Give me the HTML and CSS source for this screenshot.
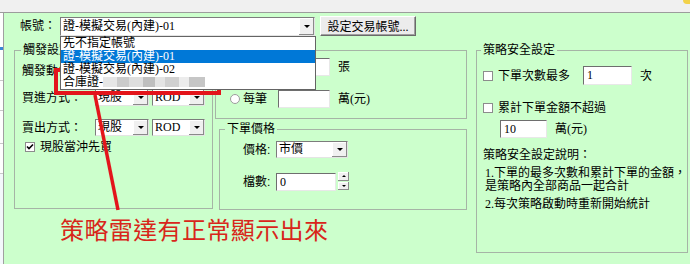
FILE: index.html
```html
<!DOCTYPE html>
<html>
  <head>
    <meta charset="UTF-8">
    <title>策略設定</title>
    <link rel="stylesheet" href="styles.css">
  </head>
  <body>
    <div class="titlebar"><span class="corner"></span></div>
    <div class="window">
      <div class="strip"></div>
      <div class="form">

        <div class="account-row">
          <span class="account-label">帳號：</span>
          <div class="combo account-combo">
            <span class="combo-text">證-模擬交易(內建)-01</span>
            <span class="arrow"></span>
            <ul class="droplist">
              <li>先不指定帳號</li>
              <li class="selected">證-模擬交易(內建)-01</li>
              <li>證-模擬交易(內建)-02</li>
              <li>合庫證-<span class="blur"></span></li>
            </ul>
          </div>
          <button class="btn">設定交易帳號...</button>
        </div>

        <div class="body-row">
          <div class="left-area">
            <div class="groups">
              <fieldset class="group trigger">
                <legend>觸發設定</legend>
                <div class="row trigger-row1">
                  <span class="field-label">觸發動作：</span>
                  <div class="combo combo-a"><span class="combo-text">立即</span><span class="arrow"></span></div>
                </div>
                <div class="row trigger-row2">
                  <span class="field-label">買進方式：</span>
                  <div class="combo combo-a"><span class="combo-text">現股</span><span class="arrow"></span></div>
                  <div class="combo combo-b"><span class="combo-text">ROD</span><span class="arrow"></span></div>
                </div>
                <div class="row trigger-row3">
                  <span class="field-label">賣出方式：</span>
                  <div class="combo combo-a"><span class="combo-text">現股</span><span class="arrow"></span></div>
                  <div class="combo combo-b"><span class="combo-text">ROD</span><span class="arrow"></span></div>
                </div>
                <div class="check-row trigger-check">
                  <span class="check checked">
                    <svg width="8" height="8" viewBox="0 0 8 8"><path d="M1 3.5 L3 5.5 L7 1.5" fill="none" stroke="#000" stroke-width="1.6"/></svg>
                  </span>
                  <span>現股當沖先買</span>
                </div>
              </fieldset>

              <div class="middle">
                <div class="box qty">
                  <div class="row qty-row1">
                    <span class="radio"></span>
                    <span class="radio-label">每次</span>
                    <span class="input qty-input"></span>
                    <span class="unit">張</span>
                  </div>
                  <div class="row qty-row2">
                    <span class="radio"></span>
                    <span class="radio-label">每筆</span>
                    <span class="input qty-input"></span>
                    <span class="unit">萬(元)</span>
                  </div>
                </div>

                <fieldset class="group price">
                  <legend>下單價格</legend>
                  <div class="row price-row">
                    <span class="price-label">價格:</span>
                    <div class="combo combo-price"><span class="combo-text">市價</span><span class="arrow"></span></div>
                  </div>
                  <div class="row count-row">
                    <span class="price-label">檔數:</span>
                    <span class="input count-input">0</span>
                    <span class="spinner">
                      <span class="spin up"></span>
                      <span class="spin down"></span>
                    </span>
                  </div>
                </fieldset>
              </div>
            </div>

            <div class="caption">策略雷達有正常顯示出來</div>
          </div>

          <fieldset class="group safety">
            <legend>策略安全設定</legend>
            <div class="row safety-row1">
              <span class="check"></span>
              <span class="safety-label">下單次數最多</span>
              <span class="input times-input">1</span>
              <span class="unit">次</span>
            </div>
            <div class="check-row safety-row2">
              <span class="check"></span>
              <span>累計下單金額不超過</span>
            </div>
            <div class="row safety-row3">
              <span class="input amount-input">10</span>
              <span class="unit">萬(元)</span>
            </div>
            <div class="note-title">策略安全設定說明：</div>
            <div class="note note1">1.下單的最多次數和累計下單的金額，<br>是策略內全部商品一起合計</div>
            <div class="note note2">2.每次策略啟動時重新開始統計</div>
          </fieldset>
        </div>

      </div>
    </div>

    <!-- red markup drawn over the dialog -->
    <svg class="annotation" width="690" height="264" viewBox="0 0 690 264">
      <rect x="56" y="70" width="163" height="23" fill="none" stroke="#e3141b" stroke-width="4"/>
      <line x1="95" y1="95" x2="118" y2="210" stroke="#e3141b" stroke-width="3.5"/>
    </svg>
  </body>
</html>
```

FILE: styles.css
```css
body {
  margin: 0;
  width: 690px;
  height: 264px;
  overflow: hidden;
  position: relative;
  background-color: #ccffcc;
  font-family: "Liberation Serif", "Noto Sans CJK TC", serif;
  font-size: 12px;
  line-height: 14px;
  color: #000;
}

/* window top edge */
.titlebar {
  height: 12px;
  background-color: #f0f0f0;
  border-bottom: 1px solid #9c9c9c;
  display: flex;
  justify-content: flex-end;
}

.corner {
  width: 7px;
  height: 4px;
  background-color: #f2d24a;
  border-radius: 0 0 0 6px;
}

.window {
  display: flex;
  height: 251px;
}

/* list view peeking in on the left */
.strip {
  width: 3px;
  border-right: 1px solid #a0a0a0;
  background: linear-gradient(to bottom,
    #fff 0, #fff 34px, #3a86d6 34px, #3a86d6 37px, #fff 37px,
    #fff 67px, #c8c8c8 67px, #c8c8c8 68px, #fff 68px,
    #fff 97px, #c8c8c8 97px, #c8c8c8 98px, #fff 98px,
    #fff 130px, #c8c8c8 130px, #c8c8c8 131px, #fff 131px,
    #fff 160px, #c8c8c8 160px, #c8c8c8 161px, #f4f8fc 161px);
}

.form {
  flex: 1;
}

/* account selector */
.account-row {
  display: flex;
  align-items: center;
  height: 20px;
  margin-top: 3px;
  padding-left: 16px;
}

.account-label {
  width: 40px;
}

.combo {
  display: flex;
  box-sizing: border-box;
  background-color: #fff;
  border: 1px solid;
  border-color: #7c7c7c #e4e4e4 #e4e4e4 #7c7c7c;
  position: relative;
}

.combo-text {
  flex: 1;
  padding-left: 2px;
  white-space: nowrap;
  overflow: hidden;
}

.arrow {
  width: 15px;
  background-color: #f0f0f0;
  box-shadow: inset -1px -1px 0 #8a8a8a, inset 1px 1px 0 #fff;
  display: flex;
  align-items: center;
  justify-content: center;
}

.arrow::after {
  content: "";
  border-left: 3px solid transparent;
  border-right: 3px solid transparent;
  border-top: 3px solid #000;
}

.account-combo {
  width: 255px;
  height: 19px;
  align-self: flex-end;
}

.account-combo .combo-text {
  line-height: 17px;
}

/* open drop-down list */
.droplist {
  position: absolute;
  top: calc(100% + 1px);
  left: -1px;
  width: 254px;
  margin: 0;
  padding: 0;
  list-style: none;
  background-color: #fff;
  border: 1px solid #646464;
  z-index: 2;
}

.droplist li {
  height: 13px;
  line-height: 13px;
  padding-left: 2px;
  white-space: nowrap;
}

.droplist li.selected {
  background-color: #0078d7;
  color: #fff;
}

.blur {
  display: inline-block;
  width: 102px;
  height: 10px;
  vertical-align: -1px;
  background: linear-gradient(90deg,
    #e6e6e6 0, #e6e6e6 14px, #cbcbcb 14px, #cbcbcb 26px,
    #dedede 26px, #dedede 40px, #bfbfbf 40px, #bfbfbf 52px,
    #e4e4e4 52px, #e4e4e4 62px, #d0d0d0 62px, #d0d0d0 76px,
    #ececec 76px, #ececec 86px, #c6c6c6 86px, #c6c6c6 102px);
}

.btn {
  margin-left: 5px;
  width: 96px;
  height: 20px;
  padding: 0;
  font-family: inherit;
  font-size: 12px;
  background-color: #ececec;
  border: 1px solid;
  border-color: #fff #6a6a6a #6a6a6a #fff;
  box-shadow: inset -1px -1px 0 #a0a0a0;
}

/* group boxes */
.body-row {
  display: flex;
  align-items: flex-start;
  margin-top: 7px;
  padding-left: 10px;
}

.left-area {
  display: flex;
  flex-direction: column;
  width: 453px;
}

.groups {
  display: flex;
  align-items: flex-start;
}

.group {
  margin: 0;
  padding: 0;
  min-width: 0;
  box-sizing: border-box;
  border: 1px solid #a6b4a6;
}

.group legend {
  padding: 0 2px;
  line-height: 14px;
}

.row {
  display: flex;
  align-items: center;
}

.check-row {
  display: flex;
  align-items: center;
  height: 12px;
}

.trigger {
  width: 199px;
  height: 166px;
  padding-left: 7px;
}

.trigger legend {
  margin-left: -1px;
}

.field-label {
  width: 73px;
}

.combo-a {
  width: 54px;
  height: 17px;
}

.combo-b {
  width: 53px;
  height: 17px;
  margin-left: 3px;
}

.combo-a .combo-text, .combo-b .combo-text, .combo-price .combo-text {
  line-height: 15px;
}

.trigger-row1 { margin-top: 5px; }
.trigger-row2 { margin-top: 10px; }
.trigger-row3 { margin-top: 13px; }
.trigger-check { margin-top: 5px; padding-left: 3px; }

.check {
  width: 10px;
  height: 10px;
  box-sizing: border-box;
  background-color: #fff;
  border: 1px solid #8c8c8c;
  margin-right: 5px;
  display: flex;
  align-items: center;
  justify-content: center;
}

.radio {
  width: 10px;
  height: 10px;
  box-sizing: border-box;
  border-radius: 50%;
  background-color: #fff;
  border: 1px solid #9c9c9c;
  margin-right: 3px;
}

.input {
  box-sizing: border-box;
  background-color: #fff;
  border: 1px solid;
  border-color: #6e6e6e #e8e8e8 #e8e8e8 #6e6e6e;
  padding-left: 3px;
}

/* middle column */
.middle {
  display: flex;
  flex-direction: column;
  width: 252px;
  margin-left: 2px;
}

.qty {
  margin-top: 7px;
  height: 69px;
  box-sizing: border-box;
  border: 1px solid #a6b4a6;
  padding-left: 14px;
}

.radio-label {
  width: 35px;
}

.qty-input {
  width: 52px;
  height: 18px;
}

.unit {
  margin-left: 8px;
}

.qty-row1 { margin-top: 7px; }
.qty-row2 { margin-top: 14px; }

.price {
  margin-top: 3px;
  margin-left: 4px;
  width: 248px;
  height: 88px;
  padding-left: 23px;
}

.price legend {
  margin-left: -18px;
}

.price-label {
  width: 33px;
  font-family: "Liberation Sans", "Noto Sans CJK TC", sans-serif;
}

.combo-price {
  width: 72px;
  height: 17px;
}

.count-input {
  width: 60px;
  height: 18px;
  line-height: 16px;
}

.spinner {
  display: flex;
  flex-direction: column;
  margin-left: 2px;
  height: 19px;
}

.spin {
  width: 11px;
  height: 9px;
  margin-bottom: 1px;
  background-color: #f0f0f0;
  box-shadow: inset -1px -1px 0 #8a8a8a, inset 1px 1px 0 #fff;
  display: flex;
  align-items: center;
  justify-content: center;
}

.spin.up::after {
  content: "";
  border-left: 2px solid transparent;
  border-right: 2px solid transparent;
  border-bottom: 2px solid #000;
}

.spin.down::after {
  content: "";
  border-left: 2px solid transparent;
  border-right: 2px solid transparent;
  border-top: 2px solid #000;
}

.price-row { margin-top: 5px; }
.count-row { margin-top: 14px; }

.caption {
  margin-top: 6px;
  margin-left: 46px;
  font-family: "Noto Sans CJK TC", sans-serif;
  font-size: 24px;
  line-height: 26px;
  letter-spacing: 0.4px;
  color: #d8261a;
}

/* right group */
.safety {
  margin-left: 9px;
  width: 212px;
  height: 210px;
  padding-left: 6px;
}

.safety legend {
  margin-left: -2px;
}

.safety-label {
  width: 85px;
}

.times-input {
  width: 49px;
  height: 19px;
  line-height: 17px;
}

.amount-input {
  margin-left: 17px;
  width: 47px;
  height: 18px;
  line-height: 16px;
}

.safety-row1 { margin-top: 9px; }
.safety-row2 { margin-top: 16px; height: 14px; }
.safety-row3 { margin-top: 5px; }

.note-title {
  margin-top: 10px;
}

.note {
  white-space: nowrap;
  padding-left: 2px;
  line-height: 13px;
}

.note1 { margin-top: 5px; }
.note2 { margin-top: 5px; }

/* red markup layer */
.annotation {
  position: absolute;
  left: 0;
  top: 0;
  pointer-events: none;
}
```
